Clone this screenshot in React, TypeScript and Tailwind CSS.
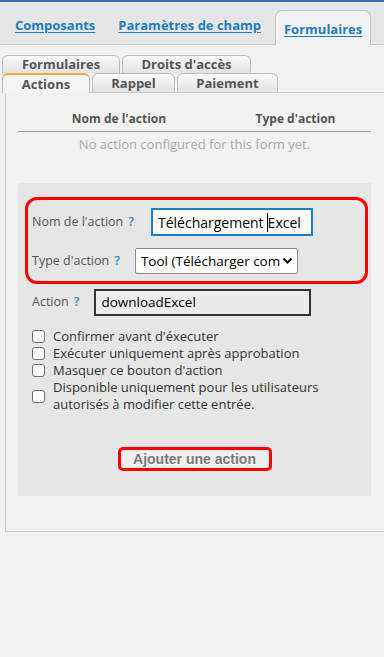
import React from "react";

const Q = () => <span className="text-[#2a8fd0] font-semibold ml-[5px]">?</span>;

function SubTab({ label, w, h, active }: { label: string; w: string; h: string; active?: boolean }) {
  return (
    <div
      className={`${w} ${h} flex items-center justify-center rounded-t-[6px] border border-b-0 border-[#bdbdbd] text-[13px] font-bold text-[#555] leading-none ${
        active
          ? "bg-[#f5f5f5] border-t-2 border-t-[#f2a53a] -mb-px relative z-10"
          : "bg-gradient-to-b from-[#fbfbfb] to-[#e2e2e2]"
      }`}
    >
      {label}
    </div>
  );
}

function Check({ children }: { children: React.ReactNode }) {
  return (
    <div className="flex items-center">
      <span className="w-[13px] h-[13px] border border-[#6f6f6f] rounded-[3px] bg-white shrink-0" />
      <span className="ml-[8px] text-[13px] leading-[17px] text-[#333]">{children}</span>
    </div>
  );
}

export default function App() {
  return (
    <div className="w-[384px] h-[657px] bg-[#f2f2f2] font-['Open_Sans',sans-serif] overflow-hidden">
      <div className="h-[2px] bg-[#3d68bb]" />
      {/* main tabs */}
      <div className="h-[43px] bg-[#e6e6e6] border-b border-[#c9c9c9] flex items-end pl-[15px]">
        <span className="mb-[9px] text-[13px] font-bold text-[#1b7dc3] underline underline-offset-2">Composants</span>
        <span className="mb-[9px] ml-[23px] text-[13px] font-bold text-[#1b7dc3] underline underline-offset-2">Paramètres de champ</span>
        <div className="ml-[14px] h-[35px] -mb-px px-[8px] bg-[#f2f2f2] border border-b-0 border-[#c4c4c4] rounded-t-[7px] flex items-center pt-[3px]">
          <span className="text-[13px] font-bold text-[#1b7dc3] underline underline-offset-2">Formulaires</span>
        </div>
      </div>

      {/* sub tabs */}
      <div className="pt-[10px] pl-[2px]">
        <div className="flex gap-[2px]">
          <SubTab label="Formulaires" w="w-[118px]" h="h-[18px]" />
          <SubTab label="Droits d'accès" w="w-[129px]" h="h-[18px]" />
        </div>
        <div className="flex gap-[2px] items-end">
          <SubTab label="Actions" w="w-[88px]" h="h-[20px]" active />
          <SubTab label="Rappel" w="w-[83px]" h="h-[19px]" />
          <SubTab label="Paiement" w="w-[101px]" h="h-[19px]" />
        </div>
      </div>

      {/* panel */}
      <div className="ml-[5px] h-[440px] border border-r-0 border-[#cccccc] pl-[12px] pr-[13px]">
        <div className="mt-[13px] flex border-b border-[#999] h-[26px] items-center text-[12px] font-bold text-[#555]">
          <div className="w-[202px] text-center">Nom de l'action</div>
          <div className="flex-1 text-center">Type d'action</div>
        </div>
        <div className="h-[25px] flex items-center justify-center text-[13px] text-[#a8a8a8]">
          No action configured for this form yet.
        </div>

        {/* form box */}
        <div className="mt-[26px] h-[313px] bg-[#e6e6e6] pt-[14px] pl-[7px] pr-[3px]">
          <div className="h-[87px] border-[3px] border-[#ff0000] rounded-[12px] pl-[4px] pt-[8px]">
            <div className="flex items-center text-[12.5px] text-[#555]">
              <span>Nom de l'action</span>
              <Q />
              <div className="ml-[17px] w-[162px] h-[28px] border-2 border-[#1a7ec8] bg-white flex items-center pl-[5px] text-[14px] text-black whitespace-nowrap overflow-hidden">
                Téléchargement <span className="inline-block w-px h-[19px] bg-black ml-[3px]" />Excel
              </div>
            </div>
            <div className="flex items-center text-[12.5px] text-[#555] mt-[12px]">
              <span>Type d'action</span>
              <Q />
              <div className="ml-[15px] w-[163px] h-[26px] border border-[#8a8a8a] rounded-[2px] bg-white flex items-center pl-[5px] pr-[4px] text-[13.5px] text-black">
                <span className="flex-1 overflow-hidden whitespace-nowrap">Tool (Télécharger comme Excel)</span>
                <svg width="11" height="8" viewBox="0 0 11 8" className="ml-[2px] shrink-0">
                  <path d="M1.5 1.5 L5.5 5.5 L9.5 1.5" stroke="#111" strokeWidth="2" fill="none" />
                </svg>
              </div>
            </div>
          </div>

          <div className="flex items-center text-[12.5px] text-[#555] pl-[7px] mt-[5px]">
            <span>Action</span>
            <Q />
            <div className="ml-[15px] w-[217px] h-[27px] border-2 border-[#333] bg-[#ececec] flex items-center pl-[5px] text-[13.5px] text-black">
              downloadExcel
            </div>
          </div>

          <div className="pl-[7px] mt-[12px] flex flex-col">
            <Check>Confirmer avant d'éxecuter</Check>
            <Check>Exécuter uniquement après approbation</Check>
            <Check>Masquer ce bouton d'action</Check>
            <Check>
              Disponible uniquement pour les utilisateurs
              <br />
              autorisés à modifier cette entrée.
            </Check>
          </div>

          <div className="flex justify-center mt-[34px] pr-[4px]">
            <div className="w-[154px] h-[24px] border-[3px] border-[#ff0000] rounded-[5px] bg-[#efefef] flex items-center justify-center font-['Liberation_Sans',sans-serif] font-bold text-[14px] text-[#777] [text-shadow:0_1px_0_#fff]">
              Ajouter une action
            </div>
          </div>
        </div>
      </div>
    </div>
  );
}
